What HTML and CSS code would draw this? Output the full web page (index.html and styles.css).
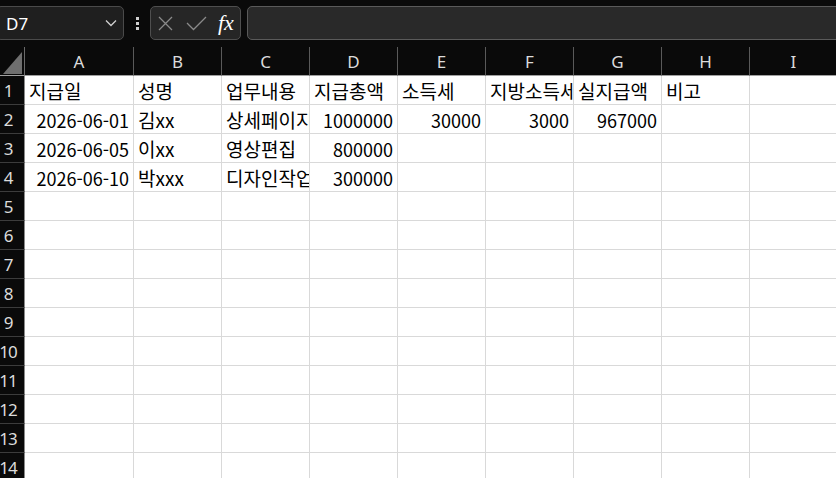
FILE: index.html
```html
<!DOCTYPE html>
<html lang="ko">
<head>
  <meta charset="UTF-8" />
  <title>시트</title>
  <link rel="stylesheet" href="styles.css">
</head>
<body>
  <div class="toolbar">
    <div class="name-box">
      <span class="cell-ref">D7</span>
      <svg class="chevron" width="12" height="8" viewBox="0 0 12 8"><polyline points="1,1.5 6,6.5 11,1.5" fill="none" stroke="#d0d0d0" stroke-width="1.3"/></svg>
    </div>
    <div class="dots"><i></i><i></i><i></i></div>
    <div class="fx-box">
      <svg width="15" height="15" viewBox="0 0 15 15"><path d="M1 1 L14 14 M14 1 L1 14" stroke="#8a8a8a" stroke-width="1.3" fill="none"/></svg>
      <svg width="21" height="15" viewBox="0 0 21 15"><polyline points="1,7 7.5,13.5 20,1" stroke="#8a8a8a" stroke-width="1.3" fill="none"/></svg>
      <span class="fx">fx</span>
    </div>
    <div class="formula-bar"></div>
  </div>

  <div class="sheet">
    <div class="corner"><span class="tri"></span></div>
    <div class="col-head">A</div>
    <div class="col-head">B</div>
    <div class="col-head">C</div>
    <div class="col-head">D</div>
    <div class="col-head">E</div>
    <div class="col-head">F</div>
    <div class="col-head">G</div>
    <div class="col-head">H</div>
    <div class="col-head">I</div>

    <div class="row-head"><span>1</span></div>
    <div class="cell">지급일</div>
    <div class="cell">성명</div>
    <div class="cell">업무내용</div>
    <div class="cell">지급총액</div>
    <div class="cell">소득세</div>
    <div class="cell">지방소득세</div>
    <div class="cell">실지급액</div>
    <div class="cell">비고</div>
    <div class="cell"></div>

    <div class="row-head"><span>2</span></div>
    <div class="cell num">2026-06-01</div>
    <div class="cell">김xx</div>
    <div class="cell">상세페이지</div>
    <div class="cell num">1000000</div>
    <div class="cell num">30000</div>
    <div class="cell num">3000</div>
    <div class="cell num">967000</div>
    <div class="cell"></div>
    <div class="cell"></div>

    <div class="row-head"><span>3</span></div>
    <div class="cell num">2026-06-05</div>
    <div class="cell">이xx</div>
    <div class="cell">영상편집</div>
    <div class="cell num">800000</div>
    <div class="cell"></div>
    <div class="cell"></div>
    <div class="cell"></div>
    <div class="cell"></div>
    <div class="cell"></div>

    <div class="row-head"><span>4</span></div>
    <div class="cell num">2026-06-10</div>
    <div class="cell">박xxx</div>
    <div class="cell">디자인작업</div>
    <div class="cell num">300000</div>
    <div class="cell"></div>
    <div class="cell"></div>
    <div class="cell"></div>
    <div class="cell"></div>
    <div class="cell"></div>
  </div>

  <script>
    // empty rows 5..14
    const sheet = document.querySelector('.sheet');
    for (let r = 5; r <= 14; r++) {
      const head = document.createElement('div');
      head.className = 'row-head';
      head.innerHTML = '<span>' + r + '</span>';
      sheet.appendChild(head);
      for (let c = 0; c < 9; c++) {
        const cell = document.createElement('div');
        cell.className = 'cell';
        sheet.appendChild(cell);
      }
    }
  </script>
</body>
</html>
```

FILE: styles.css
```css
body {
  margin: 0;
  background-color: #0a0a0a;
  height: 478px;
  overflow: hidden;
  font-family: "Noto Sans CJK KR", "Noto Sans", sans-serif;
}
.toolbar {
  display: flex;
  align-items: center;
  height: 47px;
  padding-top: 4px;
  padding-bottom: 5px;
  box-sizing: border-box;
}
.name-box {
  display: flex;
  align-items: center;
  justify-content: space-between;
  flex: none;
  width: 128px;
  height: 34px;
  margin-left: -4px;
  padding: 0 6px 0 9px;
  box-sizing: border-box;
  background-color: #1f1f1f;
  border: 1px solid #4a4a4a;
  border-radius: 5px;
}
.cell-ref {
  font-family: "Noto Sans", sans-serif;
  font-size: 17px;
  color: #ffffff;
}
.dots {
  display: flex;
  flex-direction: column;
  gap: 2px;
  margin: 0 11px 0 12px;
}
.dots i {
  width: 3px;
  height: 3px;
  background-color: #d0d0d0;
}
.fx-box {
  display: flex;
  align-items: center;
  gap: 13px;
  flex: none;
  width: 91px;
  height: 34px;
  padding-left: 7px;
  box-sizing: border-box;
  background-color: #262626;
  border: 1px solid #4f4f4f;
  border-radius: 5px;
}
.fx {
  font-family: "Liberation Serif", serif;
  font-style: italic;
  font-size: 22px;
  line-height: 22px;
  color: #ffffff;
  margin-left: -2px;
}
.formula-bar {
  flex: 1;
  height: 34px;
  margin-left: 6px;
  margin-right: -10px;
  background-color: #292929;
  border: 1px solid #5a5a5a;
  border-radius: 5px;
  box-sizing: border-box;
}
.sheet {
  display: grid;
  grid-template-columns: 25px 109px repeat(8, 88px);
  grid-auto-rows: 29px;
}
.corner {
  position: relative;
  border-right: 1px solid #6a6a6a;
  border-bottom: 1px solid #a0a0a0;
}
.tri {
  position: absolute;
  right: 2px;
  bottom: 1px;
  width: 0;
  height: 0;
  border-left: 19px solid transparent;
  border-bottom: 22px solid #6f6f6f;
}
.col-head {
  display: flex;
  align-items: center;
  justify-content: center;
  border-right: 1px solid #5a5a5a;
  border-bottom: 1px solid #a0a0a0;
  font-family: "Noto Sans", sans-serif;
  font-size: 17px;
  color: #dcdcdc;
  white-space: nowrap;
  overflow: hidden;
}
.row-head {
  display: flex;
  align-items: center;
  justify-content: center;
  padding-right: 8px;
  border-right: 1px solid #8a8a8a;
  border-bottom: 1px solid #3c3c3c;
  font-family: "Noto Sans", sans-serif;
  font-size: 17px;
  letter-spacing: -1px;
  color: #dcdcdc;
  white-space: nowrap;
}
.cell {
  background-color: #ffffff;
  border-right: 1px solid #d9d9d9;
  border-bottom: 1px solid #d9d9d9;
  padding: 0 4px;
  font-size: 19px;
  line-height: 30px;
  color: #000000;
  white-space: nowrap;
  overflow: hidden;
}
.num {
  font-size: 18px;
  text-align: right;
}
```
